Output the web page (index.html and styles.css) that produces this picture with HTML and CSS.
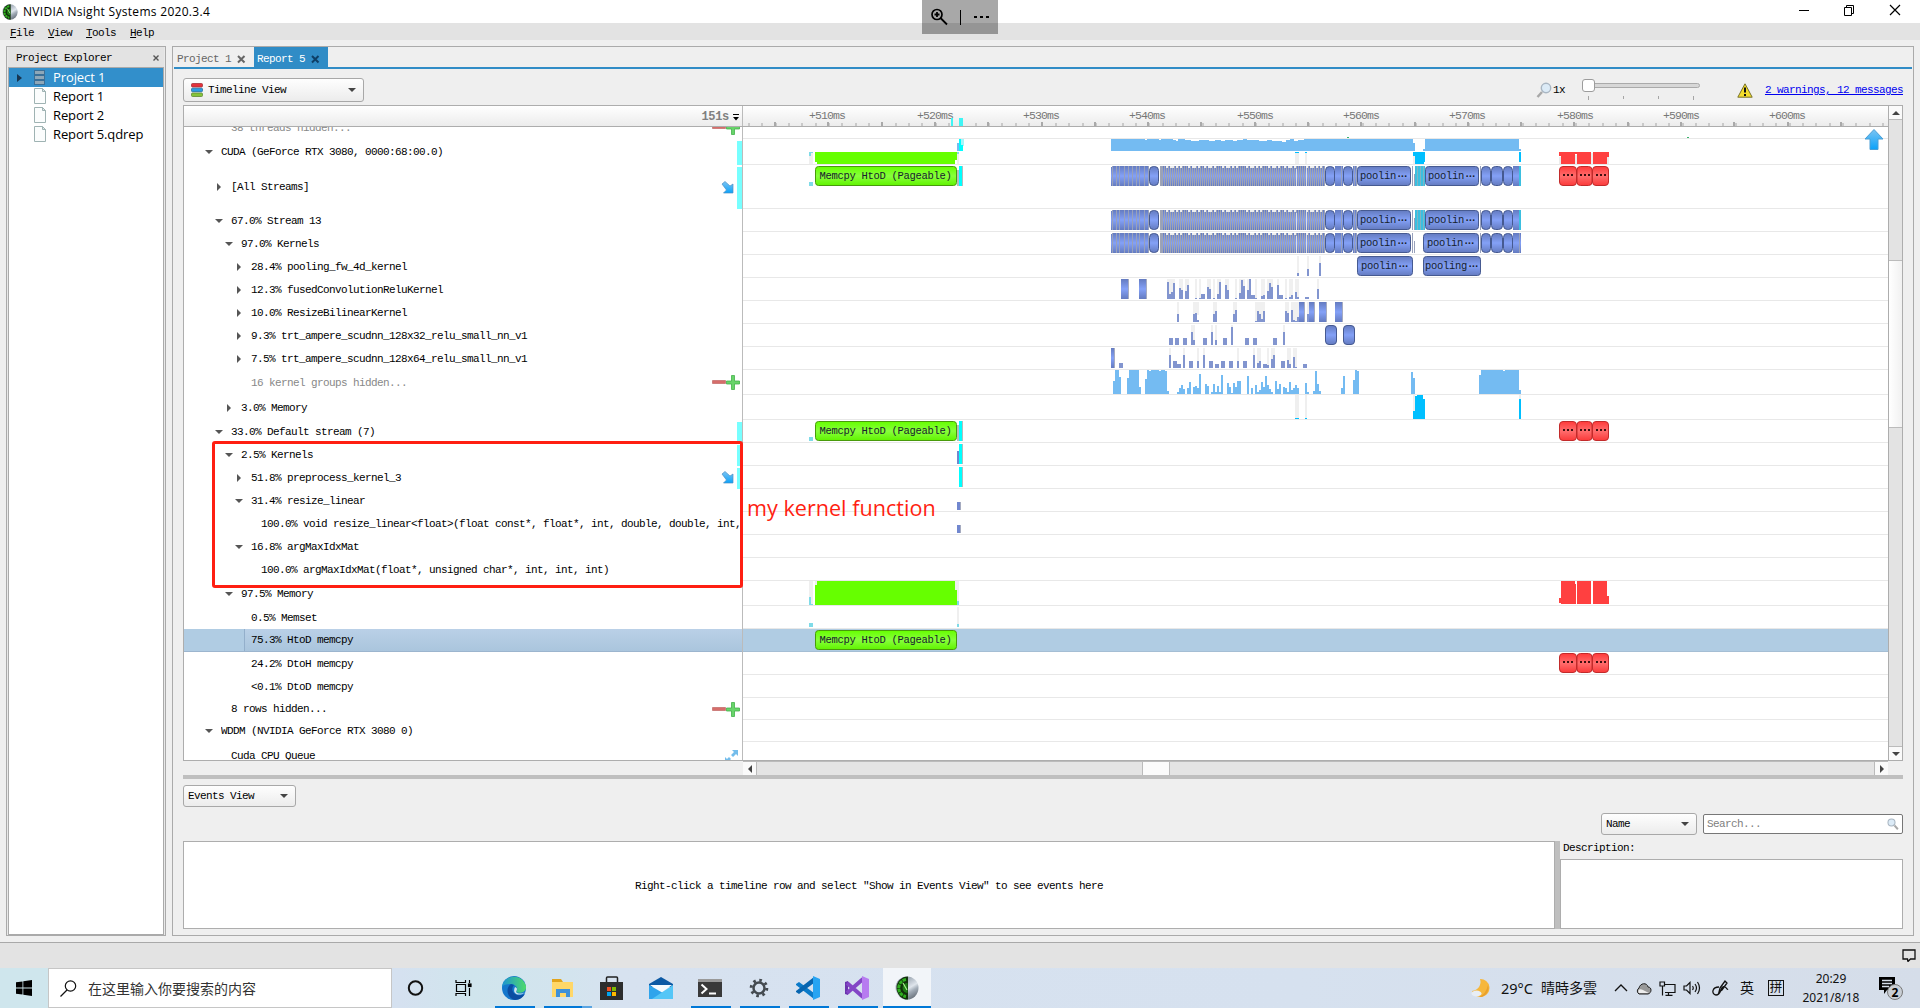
FILE: index.html
```html
<!DOCTYPE html>
<html lang="zh">
<head>
<meta charset="utf-8">
<title>NVIDIA Nsight Systems 2020.3.4</title>
<link rel="stylesheet" href="styles.css">
</head>
<body>
<svg class="defs" width="0" height="0" aria-hidden="true">
  <defs>
    <linearGradient id="kern" x1="0" y1="0" x2="0" y2="1"><stop offset="0" stop-color="#647bc0"/><stop offset=".5" stop-color="#84a1f7"/><stop offset="1" stop-color="#647bc0"/></linearGradient>
    <linearGradient id="grn" x1="0" y1="0" x2="0" y2="1"><stop offset="0" stop-color="#66ff00"/><stop offset=".5" stop-color="#88ff3c"/><stop offset="1" stop-color="#60f400"/></linearGradient>
    <linearGradient id="redg" x1="0" y1="0" x2="0" y2="1"><stop offset="0" stop-color="#ff3a3a"/><stop offset=".5" stop-color="#ff6d6d"/><stop offset="1" stop-color="#fb3a3a"/></linearGradient>
    <linearGradient id="azure" x1="0" y1="0" x2="0" y2="1"><stop offset="0" stop-color="#7cc4f2"/><stop offset="1" stop-color="#0aa2fa"/></linearGradient>
    <linearGradient id="metal" x1=".4" y1="0" x2="1" y2="1"><stop offset="0" stop-color="#8d98a5"/><stop offset=".45" stop-color="#dfe5ec"/><stop offset=".6" stop-color="#a3adb8"/><stop offset="1" stop-color="#4a525c"/></linearGradient>
    <linearGradient id="edgeg" x1="0" y1="0" x2="1" y2="0"><stop offset="0" stop-color="#1d93d3"/><stop offset="1" stop-color="#4fdb6a"/></linearGradient>
    <g id="tail"><rect x="1481.500" y=".5" width="9" height="19" rx="4"/><rect x="1491.500" y=".5" width="11" height="19" rx="4"/><rect x="1503.500" y=".5" width="9" height="19" rx="4"/></g>
    <g id="strip">
      <path fill="url(#kern)" d="M1111 1h2v-1h36v20h-38z M1160 0h165v20h-165z M1335 0h8v20h-8z M1353 0h4v20h-4z M1513 0h8v20h-8z"/>
      <path class="dash-wide" d="M1112 10H1149"/>
      <path class="dash-tight" d="M1160 10H1325"/>
      <path class="sep" d="M1161 0v20 M1341.500 0v20 M1354 0v20 M1356.500 0v20 M1412.500 0v20 M1414.500 8v12 M1480 0v20 M1519.500 0v20"/>
      <path class="nick" d="M1166 1H1182M1188 1H1200M1204 1H1216M1222 1H1238M1246 1H1262M1268 1H1280M1284 1H1298M1306 1H1322"/>
      <path class="pale" d="M1296 3v17 M1306 2v18"/>
      <g class="kpill"><rect x="1149.500" y=".5" width="9" height="19" rx="4"/><rect x="1325.500" y=".5" width="9" height="19" rx="4"/><rect x="1343.500" y=".5" width="9" height="19" rx="4"/><rect x="1357.500" y=".5" width="53" height="19" rx="3"/><use href="#tail"/></g>
    </g>
    <g id="globe"><circle cx="12" cy="12" r="11.500" fill="url(#metal)"/><path fill="#12300c" d="M13 .5a11.500 11.500 0 0 0 0 23z"/><path fill="none" stroke="#2fae1f" stroke-width="3" stroke-dasharray="3.500 .8" d="M11 3.500a8.600 8.600 0 0 0 0 17"/><path fill="#1d7a14" d="M12.500 7a5 5 0 0 0 0 10z"/><path fill="none" stroke="#a8f08e" stroke-width="1.200" d="M12 14L8 7"/></g>
    <g id="file"><path fill="#fbfdfd" stroke="#9fb3b3" d="M.5.500h8l3 3v12H.5z"/><path fill="#dfe8e8" stroke="#9fb3b3" d="M8.500.5v3h3z"/></g>
    <g id="glass"><path stroke="#a8a8a8" stroke-width="2.500" d="M6 10L1.500 15"/><circle cx="10" cy="6" r="4.700" fill="#dcebf7" stroke="#a9b6c2" stroke-width="1.400"/></g>
    <g id="pm"><path fill="#d66d6a" stroke="#b95a58" stroke-width=".6" d="M.5 5.500h13v3h-13z"/><path fill="#68d46a" stroke="#43b14a" stroke-width=".8" d="M19.500.5h3v5.500h5v3h-5v5.500h-3V9h-5V6h5z"/></g>
    <path id="dive" fill="url(#azure)" stroke="#4d8fc4" stroke-width=".7" d="M1 3l3-2.500 5 4.500 3-2v9H2.500l3-3z"/>
    <path id="cross" fill="none" stroke-width="2" d="M1 1l6.500 6.500M7.500 1L1 7.500"/>
  </defs>
</svg>

<header class="titlebar">
  <svg class="logo" width="16" height="16" viewBox="0 0 24 24"><use href="#globe"/></svg>
  <span class="app-title">NVIDIA Nsight Systems 2020.3.4</span>
  <svg class="winbtns" width="120" height="16" fill="none" stroke="#000"><path d="M10 8.500h10"/><path d="M55.500 5.500h7v8h-7zM57.500 5.500v-2h7v8h-2"/><path stroke-width="1.200" d="M101 3l10 10M111 3L101 13"/></svg>
</header>
<div class="magnifier-bar"><svg width="76" height="34" fill="none" stroke="#000"><circle cx="15" cy="14.500" r="5" stroke-width="1.700"/><path stroke-width="1.800" d="M12.500 14.500h5M15 12v5M18.500 18l6.500 6.500"/><path d="M38.500 10v15"/><path stroke-width="2" stroke-dasharray="3 3" d="M52 17h15"/></svg></div>
<nav class="menubar"><span><u>F</u>ile</span><span><u>V</u>iew</span><span><u>T</u>ools</span><span><u>H</u>elp</span></nav>

<main class="workspace">
  <aside class="explorer">
    <div class="explorer-head"><span>Project Explorer</span><svg width="9" height="9" stroke="#555"><path d="M1.500 1.500l5 5M6.500 1.500l-5 5" stroke-width="1.400"/></svg></div>
    <div class="explorer-tree">
      <div class="item selected"><svg width="38" height="17"><path fill="#173550" d="M8 5l5 4-5 4z"/><g fill="#8ea7b8" stroke="#3a6f97"><rect x="25.500" y="1.500" width="10" height="4"/><rect x="25.500" y="6.500" width="10" height="4"/><rect x="25.500" y="11.500" width="10" height="4"/></g></svg>Project 1</div>
      <div class="item"><svg width="38" height="17"><use href="#file" x="25"/></svg>Report 1</div>
      <div class="item"><svg width="38" height="17"><use href="#file" x="25"/></svg>Report 2</div>
      <div class="item"><svg width="38" height="17"><use href="#file" x="25"/></svg>Report 5.qdrep</div>
    </div>
  </aside>

  <section class="document">
    <div class="tabs">
      <div class="tab">Project 1<svg width="9" height="9" stroke="#666"><use href="#cross"/></svg></div>
      <div class="tab active">Report 5<svg width="9" height="9" stroke="#0e3f66"><use href="#cross"/></svg></div>
    </div>
    <div class="content">
      <div class="toolbar">
        <div class="combo view-combo"><svg width="12" height="14"><g stroke-width=".8"><rect x=".5" y=".5" width="11" height="3.500" rx="1" fill="#e3323b" stroke="#a6303a"/><rect x=".5" y="5.200" width="11" height="3.500" rx="1" fill="#2a9be3" stroke="#25699b"/><rect x=".5" y="10" width="11" height="3.500" rx="1" fill="#86c43a" stroke="#5f8a35"/></g></svg><span>Timeline View</span><i class="caret"></i></div>
        <div class="tools">
          <svg width="16" height="17"><use href="#glass"/></svg><span class="zoomlabel">1x</span>
          <svg class="slider" width="122" height="24"><rect x="4.500" y="5.500" width="114" height="4" rx="2" fill="#d7d7d7" stroke="#aaa"/><path stroke="#a5a5a5" d="M7.500 18v4M42.500 18v3M77.500 18v3M112.500 18v4"/><rect x="1.500" y="1.500" width="12" height="12" rx="2.500" fill="#fff" stroke="#9c9c9c"/></svg>
          <svg class="warn" width="16" height="15"><path fill="#f3dd2c" stroke="#77712c" d="M8 .8l7.200 13.400H.8z"/><path stroke="#111" stroke-width="2" d="M8 4.500v5M8 11v2"/></svg>
          <a class="messages">2 warnings, 12 messages</a>
        </div>
      </div>

      <div class="timeline">
        <div class="t-head">
          <div class="span-cell"><b>151s</b><svg width="6" height="8"><path d="M0 1.500h6" stroke="#000"/><path d="M0 4h6L3 7.500z"/></svg></div>
          <svg class="ruler" width="1145" height="20">
            <path class="minor" d="M5 18.500H1145"/><path class="major" d="M31 18H1145"/>
            <g><text x="84" y="13">+510ms</text><text x="192" y="13">+520ms</text><text x="298" y="13">+530ms</text><text x="404" y="13">+540ms</text><text x="512" y="13">+550ms</text><text x="618" y="13">+560ms</text><text x="724" y="13">+570ms</text><text x="832" y="13">+580ms</text><text x="938" y="13">+590ms</text><text x="1044" y="13">+600ms</text></g>
            <path fill="#3ff5f5" d="M208 12h2v8h-2zM216 12h4v8h-4z"/>
          </svg>
        </div>
        <div class="t-body">
          <div class="rows">
            <div class="row l1 muted first"><i></i><span>38 threads hidden...</span><svg class="pm" width="28" height="15"><use href="#pm"/></svg></div>
            <div class="row h26 l0 marked"><i class="open"></i><span>CUDA (GeForce RTX 3080, 0000:68:00.0)</span></div>
            <div class="row h44 l1 marked"><i class="shut"></i><span>[All Streams]</span><svg class="dive" width="13" height="13"><use href="#dive"/></svg></div>
            <div class="row l1"><i class="open"></i><span>67.0% Stream 13</span></div>
            <div class="row l2"><i class="open"></i><span>97.0% Kernels</span></div>
            <div class="row l3"><i class="shut"></i><span>28.4% pooling_fw_4d_kernel</span></div>
            <div class="row l3"><i class="shut"></i><span>12.3% fusedConvolutionReluKernel</span></div>
            <div class="row l3"><i class="shut"></i><span>10.0% ResizeBilinearKernel</span></div>
            <div class="row l3"><i class="shut"></i><span>9.3% trt_ampere_scudnn_128x32_relu_small_nn_v1</span></div>
            <div class="row l3"><i class="shut"></i><span>7.5% trt_ampere_scudnn_128x64_relu_small_nn_v1</span></div>
            <div class="row h25 l3 muted"><i></i><span>16 kernel groups hidden...</span><svg class="pm" width="28" height="15"><use href="#pm"/></svg></div>
            <div class="row h25 l2"><i class="shut"></i><span>3.0% Memory</span></div>
            <div class="row l1 marked"><i class="open"></i><span>33.0% Default stream (7)</span></div>
            <div class="row l2 marked"><i class="open"></i><span>2.5% Kernels</span></div>
            <div class="row l3 marked"><i class="shut"></i><span>51.8% preprocess_kernel_3</span><svg class="dive" width="13" height="13"><use href="#dive"/></svg></div>
            <div class="row l3"><i class="open"></i><span>31.4% resize_linear</span></div>
            <div class="row l4"><i></i><span>100.0% void resize_linear&lt;float&gt;(float const*, float*, int, double, double, int,</span></div>
            <div class="row l3"><i class="open"></i><span>16.8% argMaxIdxMat</span></div>
            <div class="row l4"><i></i><span>100.0% argMaxIdxMat(float*, unsigned char*, int, int, int)</span></div>
            <div class="row h25 l2"><i class="open"></i><span>97.5% Memory</span></div>
            <div class="row l3"><i></i><span>0.5% Memset</span></div>
            <div class="row l3 current"><i></i><span>75.3% HtoD memcpy</span></div>
            <div class="row l3"><i></i><span>24.2% DtoH memcpy</span></div>
            <div class="row l3"><i></i><span>&lt;0.1% DtoD memcpy</span></div>
            <div class="row h22 l1"><i></i><span>8 rows hidden...</span><svg class="pm" width="28" height="15"><use href="#pm"/></svg></div>
            <div class="row h22 l0"><i class="open"></i><span>WDDM (NVIDIA GeForce RTX 3080 0)</span></div>
            <div class="row h28 l1"><i></i><span>Cuda CPU Queue</span><svg class="expand" width="14" height="14"><path fill="#74bdeb" d="M7 1h6v6l-2-2-3 3-2-2 3-3zM0 13V8l2 2 2-2 2 2-2 2 1 2z"/></svg></div>
          </div>
          <svg class="canvas" width="1145" height="633">
            <path stroke="#e8e8e8" d="M0 11.500H1145M0 37.500H1145M0 81.500H1145M0 104.500H1145M0 127.500H1145M0 150.500H1145M0 173.500H1145M0 196.500H1145M0 219.500H1145M0 242.500H1145M0 267.500H1145M0 292.500H1145M0 315.500H1145M0 338.500H1145M0 361.500H1145M0 384.500H1145M0 407.500H1145M0 430.500H1145M0 453.500H1145M0 478.500H1145M0 501.500H1145M0 547.500H1145M0 570.500H1145M0 592.500H1145M0 614.500H1145"/>
            <rect y="502" width="1145" height="23" fill="#b0cce3"/><path stroke="#a5bed4" d="M0 524.500H1145"/>

            <!-- host to device copies -->
            <g transform="translate(-3 -27) scale(.333333)" shape-rendering="crispEdges">
              <path fill="#efefef" d="M207 156h12v36h-12zM651 156h6v36h-6z"/>
              <path fill="#7fdbe8" d="M207 156h12v4h-6v8h-6zM207 246h12v12h-12zM651 156h6v6h-6z"/>
              <path fill="#66ff00" d="M225 156h426v24h-6v12H231v-6h-6z"/>
              <path fill="#74bbf2" d="M651 129h6v24h-6z"/><path fill="#a5f6fa" d="M663 117h9v21h-9z"/><path fill="#00ffff" d="M657 117h6v18h6v18h-12zM657 198h9v60h-9z"/><path fill="#b5bcbc" d="M651 210h6v48h-6zM666 198h3v60h-3z"/>
            </g>
            <g transform="translate(-3 273) scale(.333333)" shape-rendering="crispEdges">
              <path fill="#efefef" d="M207 543h12v72h-12zM225 543h6v12h-6zM645 543h12v72h-12zM651 621h6v60h-6z"/>
              <path fill="#7fdbe8" d="M207 111h12v12h-12zM207 591h6v20h6v4h-12zM207 669h12v12h-12zM651 603h6v12h-6zM651 672h6v9h-6z"/>
              <path fill="#66ff00" d="M231 543h414v27h6v45H225v-60h6z"/>
              <path fill="#00ffff" d="M657 63h9v60h-9zM657 132h9v60h-9zM657 201h9v60h-9z"/>
              <path fill="#b5bcbc" d="M651 75h6v48h-6zM666 63h3v60h-3zM666 132h3v60h-3zM666 201h3v60h-3z"/>
              <path fill="#7187cf" d="M651 153h6v39h-6zM651 306h9v24h-9zM651 375h9v24h-9z"/><path fill="#a5abc0" d="M660 306h3v24h-3zM660 375h3v24h-3z"/>
            </g>
            <g fill="url(#grn)" stroke="#489b0b"><rect x="72.500" y="39.500" width="141" height="19" rx="3"/><rect x="72.500" y="294.500" width="141" height="19" rx="3"/><rect x="72.500" y="503.500" width="141" height="19" rx="3"/></g>
            <g class="bar-text"><text x="76.500" y="52">Memcpy HtoD (Pageable)</text><text x="76.500" y="307">Memcpy HtoD (Pageable)</text><text x="76.500" y="516">Memcpy HtoD (Pageable)</text></g>

            <!-- utilisation of the device -->
            <g transform="translate(357 -27) scale(.333333)" shape-rendering="crispEdges">
              <path fill="#74bbf2" d="M33 117H135v3h6v-3h36v3h6v-3h36v3h9v3h6v-6h21v3h18v3h24v-3h30v3h18v-3h18v3h12v-3h24v3h12v-3h18v-3h12v3h36v3h24v-3h15v3h30v3h12v-6h12v-3h12v6h12v-3h18v-3H939v12h6v24H33zM975 117h282v30h6v6H969v-6h6z"/>
              <path fill="#efefef" d="M585 159h12v33h-12zM615 159h6v33h-6zM939 160h6v32h-6zM585 885h12v68h-12zM615 885h6v68h-6zM939 885h6v50h-6zM1257 885h6v12h-6z"/>
              <path fill="#00bfff" d="M585 156h12v3h-12zM615 156h6v3h-6zM939 156h36v30h-3v6h-27v-24h-6zM1257 156h6v30h-6zM585 954h12v3h-12zM615 954h6v3h-6zM939 933h6v-45h6v-3h18v12h6v60h-36zM1257 897h6v60h-6z"/>
              <path fill="#3ab26b" d="M741 111h6v3h-6zM1761 111h6v3h-6z"/>
            </g>

            <g transform="translate(-743 39)"><use href="#strip"/><path fill="#3bbfe0" d="M1415 0h10v20h-10zM1519 0h2v20h-2z"/><path class="cyan-sep" d="M1417 10h8"/><g class="kpill"><rect x="1425.500" y=".5" width="53" height="19" rx="3"/></g></g>
            <g transform="translate(-743 83)"><use href="#strip"/><path fill="#3bbfe0" d="M1415 0h10v20h-10zM1519 0h2v20h-2z"/><path class="cyan-sep" d="M1417 10h8"/><g class="kpill"><rect x="1425.500" y=".5" width="53" height="19" rx="3"/></g></g>
            <g transform="translate(-743 106)"><use href="#strip"/><g class="kpill"><rect x="1423.500" y=".5" width="55" height="19" rx="3"/></g></g>
            <g transform="translate(-743 129)" class="kpill"><rect x="1357.500" y=".5" width="55" height="19" rx="3"/><rect x="1423.500" y=".5" width="57" height="19" rx="3"/></g>
            <g transform="translate(-743 198)" class="kpill"><rect x="1325.500" y=".5" width="11" height="19" rx="3.500"/><rect x="1343.500" y=".5" width="11" height="19" rx="3.500"/></g>
            <g class="bar-text"><text x="617" y="52">poolin<tspan>···</tspan></text><text x="685" y="52">poolin<tspan>···</tspan></text><text x="617" y="96">poolin<tspan>···</tspan></text><text x="685" y="96">poolin<tspan>···</tspan></text><text x="617" y="119">poolin<tspan>···</tspan></text><text x="684" y="119">poolin<tspan>···</tspan></text><text x="618" y="142">poolin<tspan>···</tspan></text><text x="682" y="142">pooling<tspan>···</tspan></text></g>

            <!-- per-kernel occupancy -->
            <g transform="translate(357 -27) scale(.333333)">
              <path fill="url(#kern)" d="M63 537h21v60h-21zM117 537h21v60h-21z"/><path fill="url(#kern)" d="M597 606h15v60h-15zM627 606h15v60h-15zM657 606h21v60h-21zM705 606h21v60h-21z"/><path fill="url(#kern)" d="M33 744h9v60h-9z"/>
              <path fill="#a5abc0" d="M84 537h3v60h-3zM138 537h3v60h-3zM612 606h3v60h-3zM642 606h3v60h-3zM678 606h3v60h-3zM726 606h3v60h-3zM42 744h3v60h-3z"/>
            </g>
            <g transform="translate(358 -27) scale(.333333)" class="ghost">
              <path d="M591 468v51M621 468v51M657 468v51"/>
              <path d="M201 537v60M207 537v60M213 537v60M219 537v60M237 537v60M243 537v60M255 537v60M261 537v60M285 537v60M297 537v60M321 537v60M327 537v60M339 537v60M351 537v60M357 537v60M375 537v60M381 537v60M405 537v60M417 537v60M423 537v60M429 537v60M441 537v60M465 537v60M483 537v60M489 537v60M501 537v60M507 537v60M513 537v60M531 537v60M555 537v60M567 537v60M573 537v60M585 537v60M591 537v60M651 537v60"/>
              <path d="M231 606v60M279 606v60M285 606v60M291 606v40M339 606v60M345 606v60M399 606v60M405 606v60M465 606v60M471 606v60M477 606v60M483 606v60M489 606v60M555 606v60M561 606v40M573 606v60M579 606v60M585 606v60M591 606v60M621 606v60"/>
              <path d="M273 675v60M279 675v60M333 675v60M345 675v60M393 675v60M549 675v60"/>
              <path d="M207 744v60M249 744v60M291 744v60M309 744v60M411 744v60M459 744v60M471 744v60M477 744v60M501 744v60M513 744v60M519 744v60M561 744v60M567 744v60M579 744v60M585 744v60"/>
            </g>
            <g transform="translate(358 -27) scale(.333333)" class="spikes">
              <path d="M591 528v-9M621 528v-21M657 528v-39"/>
              <path d="M201 597V545M207 597V583M213 597V576M219 597V549M237 597V563M243 597V571M255 597V573M261 597V555M285 597V594M297 597V594M303 597V583M309 597V583M321 597V561M327 597V568M339 597V594M351 597V582M357 597V546M375 597V555M381 597V570M405 597V594M417 597V580M423 597V540M429 597V558M441 597V570M447 597V537M453 597V585M459 597V585M465 597V594M483 597V588M489 597V585M501 597V572M507 597V549M513 597V560M531 597V555M537 597V586M543 597V586M555 597V594M567 597V590M573 597V585M585 597V576M591 597V590M615 597V591M621 597V591M651 597V567"/>
              <path d="M231 666V642M279 666V642M285 666V639M291 666V660M339 666V642M345 666V633M399 666V642M405 666V630M465 666V663M471 666V633M477 666V642M483 666V657M489 666V633M555 666V633M561 666V639M573 666V630M579 666V660M585 666V663M591 666V651M621 666V642"/>
              <path d="M207 735V714M213 735V714M225 735V714M231 735V714M249 735V714M255 735V714M273 735V696M279 735V720M309 735V714M315 735V714M333 735V696M345 735V720M369 735V714M375 735V714M393 735V681M435 735V714M441 735V714M459 735V714M465 735V714M519 735V714M525 735V714M549 735V696"/>
              <path d="M57 804V789M63 804V789M207 804V765M219 804V783M225 804V783M231 804V792M237 804V792M249 804V765M267 804V783M273 804V783M291 804V783M309 804V765M327 804V783M333 804V783M345 804V792M351 804V792M363 804V783M369 804V783M387 804V783M393 804V783M411 804V783M429 804V783M435 804V783M459 804V765M471 804V789M477 804V783M489 804V792M495 804V792M501 804V795M513 804V777M519 804V765M543 804V783M549 804V783M561 804V780M567 804V792M579 804V771M585 804V801M609 804V792M615 804V792"/>
            </g>
            <g transform="translate(358 -27) scale(.333333)" class="sky">
              <path d="M39 882V843M45 882V810M51 882V810M57 882V831M81 882V834M87 882V810M93 882V810M99 882V810M105 882V810M111 882V810M117 882V861M135 882V837M141 882V810M147 882V813M153 882V810M159 882V810M165 882V810M171 882V810M177 882V813M183 882V810M189 882V810M195 882V813M201 882V873M231 882V876M237 882V864M243 882V855M249 882V867M261 882V864M267 882V846M279 882V861M285 882V858M291 882V864M297 882V822M315 882V852M321 882V858M333 882V876M339 882V852M345 882V876M351 882V858M357 882V876M363 882V825M381 882V849M387 882V861M393 882V879M399 882V849M405 882V861M411 882V843M417 882V843M441 882V828M453 882V864M465 882V855M471 882V876M477 882V870M483 882V846M489 882V861M495 882V828M501 882V855M507 882V867M513 882V876M525 882V843M531 882V867M537 882V852M549 882V861M555 882V864M561 882V876M567 882V846M573 882V870M579 882V864M585 882V855M591 882V864M615 882V849M621 882V876M639 882V873M645 882V813M651 882V852M657 882V873M723 882V864M729 882V828M759 882V840M765 882V810M771 882V813M933 882V816M939 882V834M1137 882V825M1257 882V870"/>
            </g>
            <path fill="#74bbf2" d="M738 243h22v1h2v-1h14v24h-38z"/>

            <!-- device to host copies -->
            <g transform="translate(757 -127) scale(.333333)" shape-rendering="crispEdges">
              <path fill="#ececec" d="M177 471h6v21h-6zM225 465h6v27h-6zM273 459h6v33h-6zM321 471h6v21h-6z"/>
              <path fill="#ff4040" d="M177 456h96v36h-42v-30h-6v30h-42v-24h-6zM279 456h48v15h-6v21h-42z"/>
            </g>
            <path fill="#ff4040" d="M818 454h14v3h1v20h-15v-1h-2v-5h2zM834 454h14v23h-14zM850 454h14v15h2v8h-16z" shape-rendering="crispEdges"/>
            <g class="rpill"><g id="rset"><rect x="816.500" y="39.500" width="17" height="19" rx="3.500"/><rect x="834" y="39.500" width="15" height="19" rx="3.500"/><rect x="849.500" y="39.500" width="16" height="19" rx="3.500"/><path d="M820 48h10M837 48h10M853 48h10"/></g><use href="#rset" y="255"/><use href="#rset" y="487"/></g>

            <path fill="url(#azure)" stroke="#4b9fd6" d="M1131 2.500l9 9.500h-5v10.500h-8v-10.500h-5z"/>
          </svg>
          <div class="vscroll"><i class="btn up"></i><i class="thumb"></i><i class="btn down"></i></div>
          <div class="note-box"></div>
          <div class="note-text">my kernel function</div>
        </div>
      </div>
      <div class="hscroll"><i class="btn left"></i><i class="thumb"></i><i class="btn right"></i></div>
      <div class="splitter"></div>

      <div class="events-bar"><div class="combo events-combo"><span>Events View</span><i class="caret"></i></div></div>
      <div class="filter-bar">
        <div class="combo name-combo"><span>Name</span><i class="caret"></i></div>
        <div class="search"><span>Search...</span><svg width="14" height="14"><g transform="matrix(-.75 0 0 .75 13 1)"><use href="#glass"/></g></svg></div>
      </div>
      <div class="events">
        <div class="events-list">Right-click a timeline row and select "Show in Events View" to see events here</div>
        <div class="vsplit"></div>
        <div class="details"><div class="details-label">Description:</div><div class="details-box"></div></div>
      </div>
    </div>
  </section>
</main>

<div class="statusbar"><svg width="14" height="13"><path fill="none" stroke="#111" stroke-width="1.300" d="M1 1h12v9H8.500L6 12.500 5.500 10H1z"/></svg></div>

<footer class="taskbar">
  <div class="start"><svg width="16" height="16"><path d="M0 2.300L6.500 1.400V7.600H0zM7.300 1.300L16 0v7.600H7.300zM0 8.400h6.500v6.200L0 13.700zM7.300 8.400H16V16l-8.700-1.200z"/></svg></div>
  <div class="task-search"><svg width="17" height="17" fill="none" stroke="#111" stroke-width="1.200"><circle cx="10.500" cy="6" r="5.200"/><path d="M7 10l-6.500 6.500"/></svg><span>在这里输入你要搜索的内容</span></div>
  <div class="apps">
    <div class="app"><svg width="24" height="24"><circle cx="11.500" cy="12" r="6.700" fill="none" stroke="#111" stroke-width="2"/></svg></div>
    <div class="app"><svg width="24" height="24" fill="none" stroke="#000" stroke-width="1.200"><path d="M3 4v2.500h9.500V4M3.500 8.500h9v7h-9zM3 20v-2.500h9.500V20M16.500 4v3M16.500 12v8"/><rect x="15.500" y="8" width="2.500" height="2.500" fill="#000"/></svg></div>
    <div class="app run"><svg width="24" height="24"><circle cx="12" cy="12" r="12" fill="#1577cc"/><path fill="url(#edgeg)" d="M0 11C1-1 20-4 24 10c1 6-6 8-10 6 3-3 0-8-5-8-4 0-8 1-9 3z"/><path fill="#0c4da2" d="M9 8c-6 4-4 14 4 16 5 0 8-3 10-6-9 4-16-3-11-9z"/><path fill="#cfe4ee" d="M13 11c3 1 2 3 1 5 2 2 6 2 9 0-3 4-14 4-10-5z"/></svg></div>
    <div class="app run multi"><svg width="24" height="24"><path fill="#e2a41c" d="M1 3h9l2 3v3H1z"/><path fill="#ffd768" d="M1 6h21v15H1z"/><path fill="#3f91d8" d="M5 13h14v8h-4v-4H9v4H5z"/></svg></div>
    <div class="app"><svg width="24" height="24"><path fill="none" stroke="#222" stroke-width="1.500" d="M6.500 6V2q0-1 1-1h9q1 0 1 1v4"/><path fill="#2d2d2d" d="M0 6h23v18H0z"/><path fill="#f05025" d="M7 11h4v4H7z"/><path fill="#7fba00" d="M12 11h4v4h-4z"/><path fill="#00a4ef" d="M7 16h4v4H7z"/><path fill="#ffb900" d="M12 16h4v4h-4z"/></svg></div>
    <div class="app"><svg width="24" height="24"><path fill="#0c59a4" d="M0 8l12-7 12 7v3H0z"/><path fill="#f5fafe" d="M1 9h22L12 17z"/><path fill="#2fa4ec" d="M0 9l14 8-9 6H0z"/><path fill="#55c6f7" d="M24 9v14H3z"/></svg></div>
    <div class="app run"><svg width="24" height="24"><path fill="#3a3a3a" d="M0 3h24v18H0z"/><path fill="#999" d="M0 3h24v3H0z"/><path fill="none" stroke="#fff" stroke-width="2" d="M3.500 8.500l5 4.500-5 4.500M11 17.500h7"/></svg></div>
    <div class="app run"><svg width="24" height="24" fill="none" stroke="#444a50"><circle cx="12" cy="12" r="5.500" stroke-width="2.500"/><circle cx="12" cy="12" r="7.800" stroke-width="3" stroke-dasharray="2.600 3.530"/></svg></div>
    <div class="app run"><svg width="24" height="24"><path fill="#0a7ac9" d="M0 8l3-2 15 11v6L0 9z"/><path fill="#0765b0" d="M0 16l3 2L18 7V1L0 15z"/><path fill="#27a4f2" d="M17 0l7 3v18l-7 3z"/></svg></div>
    <div class="app run"><svg width="24" height="24"><path fill="#6b34ad" d="M0 6l3-1v14l-3-1z"/><path fill="none" stroke="#8345c6" stroke-width="4" d="M2 7l16 14M2 17L18 3"/><path fill="#b77cf0" d="M17 0l7 3v18l-7 3z"/></svg></div>
    <div class="app run current-app"><svg width="24" height="24"><use href="#globe"/></svg></div>
  </div>
  <div class="tray">
    <svg class="moon" width="20" height="20"><path fill="#f6b73c" d="M9 1a9 9 0 1 1-8 12A9 9 0 0 0 9 1z"/><path fill="#e9a02c" d="M17 7a9 9 0 0 1-9 12q7-3 9-12z"/><ellipse cx="5.500" cy="15.500" rx="5" ry="3" fill="#e8eef5"/></svg>
    <span class="temp">29°C</span><span class="weather">晴時多雲</span>
    <svg class="chev" width="14" height="8"><path fill="none" stroke="#111" stroke-width="1.300" d="M1 7l6-6 6 6"/></svg>
    <svg class="cloud" width="17" height="13"><path fill="#999" stroke="#222" d="M4 12a3.500 3.500 0 0 1 0-6c1-5 8-6 9-1 4 0 4 6 0 7z"/><path fill="#ededed" d="M4 11c-2-3 1-5 4-3l6 3z"/></svg>
    <svg class="net" width="17" height="15"><path fill="none" stroke="#111" stroke-width="1.200" d="M5 3.500h11v8H6M9.500 12v2M6.500 14.300h7M3.500 5.500v9M1 1h4.500v4H1z"/></svg>
    <svg class="vol" width="18" height="14"><path fill="none" stroke="#111" stroke-width="1.200" d="M1 5h2.500L7 1.500v11L3.500 9H1zM9.500 5q1.500 2 0 4M12 3q3 4 0 8M14.500 1q4 6 0 12"/></svg>
    <svg class="pen" width="17" height="17"><path fill="none" stroke="#111" stroke-width="1.300" d="M8 8l5-7 2 2-5 7-3 2zM7 7c-7 0-8 7-3 8 6 0 4-10 9-8 2 1 2 3 3 2"/></svg>
    <span class="ime">英</span><span class="pin">拼</span>
    <span class="clock">20:29<br>2021/8/18</span>
    <svg class="notif" width="26" height="28"><path d="M0 1h16v13H8l-3 4v-4H0z"/><path stroke="#d5deea" stroke-width="1.300" d="M3 4.500h10M3 7.500h10M3 10.500h7"/><circle cx="16" cy="16" r="7.500" fill="#c9ced4" stroke="#777"/><text x="16" y="20.500" text-anchor="middle">2</text></svg>
  </div>
</footer>
</body>
</html>
```
FILE: styles.css
```css
* { box-sizing: border-box; }
body {
  margin: 0; width: 1920px; height: 1008px; overflow: hidden;
  display: flex; flex-direction: column; position: relative;
  background: #efefef; color: #000;
  font: 11px/14px "Liberation Mono", "Noto Sans CJK SC", monospace;
  letter-spacing: -.6px; white-space: nowrap;
}
svg { display: block; flex: none; }
.defs { position: absolute; }
i { flex: none; display: block; }

.titlebar { height: 23px; background: #fff; display: flex; align-items: center; padding-left: 2px; }
.app-title { font: 12px/20px "Open Sans", sans-serif; letter-spacing: .3px; margin-left: 5px; }
.winbtns { margin: -3px 11px 0 auto; }
.magnifier-bar { position: absolute; left: 922px; top: 0; width: 76px; height: 34px; background: rgba(0,0,0,.34); }
.menubar { height: 17px; background: #e3e3e3; display: flex; gap: 14px; padding: 3px 0 0 10px; }

.workspace { height: 902px; display: flex; gap: 6px; padding: 6px; }
.explorer { width: 160px; height: 890px; border: 1px solid #aaa; padding: 0 1px; display: flex; flex-direction: column; background: #e9e9e9; }
.explorer-head { height: 20px; background: #e3e3e3; display: flex; align-items: center; justify-content: space-between; padding: 2px 3px 0 8px; }
.explorer-tree { flex: 1; border: 1px solid #aaa; background: #fff; font: 13px/19px "Open Sans", sans-serif; letter-spacing: -.1px; }
.item { height: 19px; display: flex; align-items: center; gap: 6px; }
.item.selected { background: #328fcb; color: #fff; }

.document { flex: 1; height: 890px; border: 1px solid #aaa; padding: 0 1px; }
.tabs { height: 22px; display: flex; border-bottom: 2px solid #308cc6; }
.tab { padding: 4px 4px 0 3px; display: flex; align-items: center; gap: 6px; color: #666; width: 80px; }
.tab.active { width: 74px; background: #308cc6; color: #fff; }
.content { padding: 9px 9px 0; }
.toolbar { height: 27px; display: flex; justify-content: space-between; align-items: flex-start; }
.combo { display: flex; align-items: center; border: 1px solid #a8a8a8; border-radius: 3px; background: linear-gradient(#fefefe, #ececec); padding: 0 7px 0 4px; }
.caret { margin-left: auto; border: 4px solid transparent; border-top-color: #444; border-bottom: 0; }
.view-combo { width: 181px; height: 24px; padding-left: 7px; gap: 5px; }
.tools { display: flex; align-items: center; height: 24px; }
.zoomlabel { margin-left: 1px; width: 28px; }
.slider { margin-top: -1px; }
.warn { margin-left: 34px; }
.messages { color: #0000f0; text-decoration: underline; margin-left: 12px; }

.timeline { height: 656px; width: 1720px; border: 1px solid #adadad; background: #fff; }
.t-head { height: 21px; border-bottom: 1px solid #adadad; background: linear-gradient(#fff, #ececec); display: flex; width: 1705px; }
.span-cell { width: 559px; border-right: 1px solid #bbb; display: flex; align-items: center; justify-content: flex-end; gap: 4px; padding: 2px 3px 0 0; color: #808080; font-size: 12px; letter-spacing: -.3px; }
.ruler text { fill: #777; text-anchor: middle; font-size: 11.500px; letter-spacing: -.9px; }
.ruler path { shape-rendering: crispEdges; }
.minor { stroke: #c9c9c9; stroke-width: 3; stroke-dasharray: 2 11.340; }
.major { stroke: #a9a9a9; stroke-width: 4; stroke-dasharray: 2 51.300; }

.t-body { height: 633px; display: flex; position: relative; }
.rows { width: 559px; height: 633px; overflow: hidden; border-right: 1px solid #bbb; }
.row { height: 23px; display: flex; align-items: center; position: relative; padding-right: 2px; }
.row > span { flex: 1 1 0; min-width: 0; overflow: hidden; }
.row > i { width: 16px; height: 8px; }
.row > i.open::before { content: ""; display: block; margin-top: 2px; width: 0; border: 4px solid transparent; border-top: 4px solid #555; border-bottom: 0; }
.row > i.shut::before { content: ""; display: block; margin-left: 2px; width: 0; border: 4px solid transparent; border-left-color: #555; border-right: 0; }
.row.h22 { height: 22px; }
.row.h25 { height: 25px; }
.row.h26 { height: 26px; }
.row.h28 { height: 28px; }
.row.h44 { height: 44px; }
.row.first { margin-top: -11px; }
.l0 { padding-left: 21px; }
.l1 { padding-left: 31px; }
.l2 { padding-left: 41px; }
.l3 { padding-left: 51px; }
.l4 { padding-left: 61px; }
.muted { color: #888; }
.marked { background: linear-gradient(#7ff, #7ff) right 100% / 5px calc(100% - 2px) no-repeat; }
.dive { margin-right: 6px; }
.expand { margin-right: 1px; }
.current { background: linear-gradient(90deg, #b0cce3 60px, #93afcb 60px, #93afcb 61px, transparent 61px), linear-gradient(#bad0e7, #aac5dd); border-bottom: 1px solid #9cb5ce; }

.kpill rect, .kpill use, #tail { fill: url(#kern); stroke: #465a91; }
.bar-text text { font-size: 10.500px; letter-spacing: -.3px; fill: #16222c; }
.bar-text tspan { letter-spacing: -3.100px; font-weight: bold; }
.sep, .dash-wide, .dash-tight, .nick, .pale, .cyan-sep { fill: none; shape-rendering: crispEdges; }
.sep { stroke: #98a1bb; stroke-width: 1; }
.dash-wide { stroke: #98a1bb; stroke-width: 20; stroke-dasharray: 1 3 1 2 1 4 1 3 1 3; }
.dash-tight { stroke: #a0a4b2; stroke-width: 20; stroke-dasharray: 1 1; }
.nick { stroke: #eee; stroke-width: 2; stroke-dasharray: 2 2 4 2; }
.pale { stroke: #ddd; stroke-width: 1; }
.cyan-sep { stroke: #7fb4c4; stroke-width: 20; stroke-dasharray: 1 2; }
.ghost, .spikes, .sky { fill: none; stroke-width: 6; shape-rendering: crispEdges; }
.ghost { stroke: #f0f0f0; }
.spikes { stroke: #8295cf; }
.sky { stroke: #74bbf2; }
.rpill { fill: url(#redg); stroke: #c22b2b; }
.rpill path { stroke: #401010; stroke-width: 2; stroke-dasharray: 2 2; }

.vscroll { width: 14px; background: #e3e3e3; border-left: 1px solid #adadad; margin-top: -21px; height: 654px; position: relative; display: flex; flex-direction: column; }
.vscroll .thumb { background: linear-gradient(90deg, #fff, #f1f1f1); border: solid #bbb; border-width: 1px 0; height: 168px; margin-top: 140px; }
.btn { background: #fafafa; display: flex; align-items: center; justify-content: center; }
.btn::before { content: ""; border: 4px solid transparent; }
.vscroll .btn { height: 14px; border-bottom: 1px solid #bbb; }
.btn.up::before { border-bottom-color: #444; border-top: 0; }
.vscroll .btn.down { margin-top: auto; border-top: 1px solid #bbb; border-bottom: 0; }
.btn.down::before { border-top-color: #444; border-bottom: 0; }
.note-box { position: absolute; left: 28px; top: 314px; width: 531px; height: 147px; border: 3px solid #ff1f12; border-radius: 3px; }
.note-text { position: absolute; left: 563px; top: 365px; font: 21.600px/32px "Open Sans", sans-serif; letter-spacing: 0; color: #ff1f12; }

.hscroll { margin-left: 560px; width: 1145px; height: 14px; background: #e4e4e4; border-top: 1px solid #bbb; display: flex; }
.hscroll .btn { width: 14px; border-right: 1px solid #bbb; }
.hscroll .thumb { margin-left: 385px; width: 28px; background: #fbfbfb; border: solid #bbb; border-width: 0 1px; }
.btn.left::before { border-right-color: #444; border-left: 0; }
.hscroll .btn.right { margin-left: auto; border-left: 1px solid #bbb; border-right: 0; }
.btn.right::before { border-left-color: #444; border-right: 0; }
.splitter { height: 4px; background: #bfbfbf; width: 1720px; }

.events-bar { padding-top: 6px; height: 34px; }
.events-combo { width: 113px; height: 22px; }
.filter-bar { display: flex; justify-content: flex-end; gap: 6px; height: 28px; width: 1720px; }
.name-combo { width: 96px; height: 22px; }
.search { width: 200px; height: 20px; margin-top: 1px; border: 1px solid #777; border-radius: 2px; background: #fff; display: flex; align-items: center; justify-content: space-between; padding: 0 2px 0 3px; color: #808080; }
.events { display: flex; height: 88px; width: 1720px; }
.events-list { width: 1372px; border: 1px solid #adadad; background: #fff; display: flex; align-items: center; justify-content: center; padding-top: 2px; }
.vsplit { width: 5px; background: #bfbfbf; }
.details { flex: 1; display: flex; flex-direction: column; }
.details-label { height: 18px; line-height: 14px; padding-left: 3px; }
.details-box { flex: 1; border: 1px solid #adadad; background: #fff; }

.statusbar { height: 26px; background: #e3e3e3; border-top: 1px solid #a9a9a9; display: flex; justify-content: flex-end; padding: 6px 4px 0; }
.taskbar { height: 40px; display: flex; background: linear-gradient(90deg, #cfe6ed 0, #cfe6ed 48px, #d5e1f0 400px, #d0e5ed 470px, #d3e4ee 570px, #d7e2f0 620px, #d6e1ef 1300px, #d5dde9); font-family: "Noto Sans", "Noto Sans CJK SC", sans-serif; letter-spacing: 0; }
.start { width: 48px; display: flex; align-items: center; justify-content: center; }
.task-search { width: 344px; background: #fff; border: 1px solid #c6c6c6; display: flex; align-items: center; gap: 11px; padding-left: 11px; font-size: 14px; line-height: 20px; color: #333; }
.task-search span { padding-top: 2px; }
.apps { display: flex; }
.app { width: 49px; display: flex; align-items: center; justify-content: center; position: relative; }
.app svg { margin-left: -1px; }
.run::after { content: ""; position: absolute; left: 5px; right: 4px; bottom: 0; height: 2px; background: #0078d7; }
.multi::after { right: -4px; background: linear-gradient(90deg, #0078d7 80%, #5aa5e2 80%); }
.current-app { background: #f2f5f9; width: 48px; margin-left: 1px; }
.current-app::after { left: 0; right: 0; }
.tray { margin-left: auto; width: 449px; display: flex; align-items: center; font-size: 14px; color: #111; }
.temp { margin-left: 10px; width: 40px; font-size: 14.500px; }
.weather { width: 73px; }
.cloud { margin-left: 7px; }
.net { margin-left: 7px; }
.vol { margin-left: 7px; }
.pen { margin-left: 11px; }
.ime { margin-left: 11px; }
.pin { margin-left: 14px; border: 1px solid #111; width: 16px; height: 16px; line-height: 14px; font-size: 12.500px; text-align: center; }
.clock { width: 66px; margin-left: 14px; text-align: center; font-size: 12px; line-height: 19px; }
.notif { margin-left: 15px; margin-top: 4px; }
.notif text { font: bold 12px "Noto Sans", sans-serif; }
```
